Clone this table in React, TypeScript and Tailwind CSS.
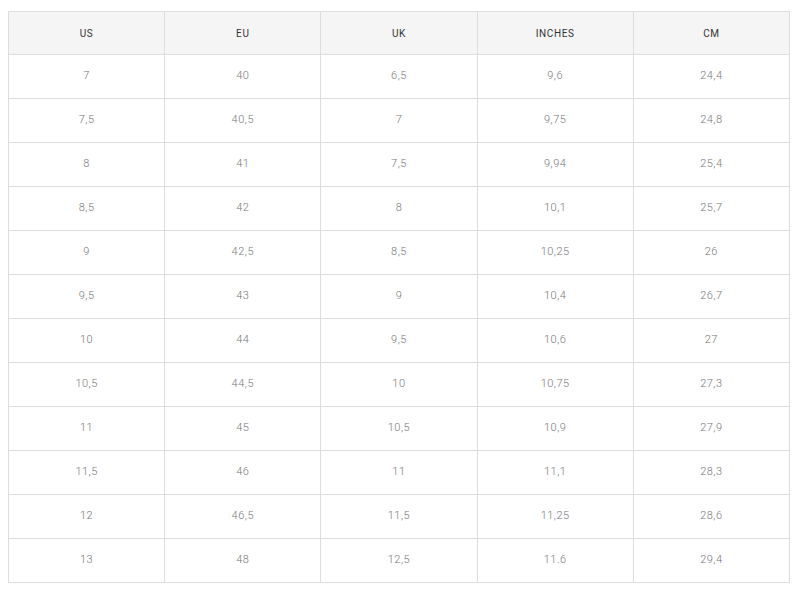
import React from "react";

const head = ["US", "EU", "UK", "INCHES", "CM"];
const rows = [
  ["7", "40", "6,5", "9,6", "24,4"],
  ["7,5", "40,5", "7", "9,75", "24,8"],
  ["8", "41", "7,5", "9,94", "25,4"],
  ["8,5", "42", "8", "10,1", "25,7"],
  ["9", "42,5", "8,5", "10,25", "26"],
  ["9,5", "43", "9", "10,4", "26,7"],
  ["10", "44", "9,5", "10,6", "27"],
  ["10,5", "44,5", "10", "10,75", "27,3"],
  ["11", "45", "10,5", "10,9", "27,9"],
  ["11,5", "46", "11", "11,1", "28,3"],
  ["12", "46,5", "11,5", "11,25", "28,6"],
  ["13", "48", "12,5", "11.6", "29,4"],
];

export default function App() {
  return (
    <div className="w-[804px] h-[600px] bg-white pt-[11px] pl-[8px]" style={{ fontFamily: "Roboto, 'Liberation Sans', sans-serif" }}>
      <table className="w-[782px] border-collapse table-fixed">
        <thead>
          <tr className="h-[43px] bg-[#f5f5f5]">
            {head.map((h) => (
              <th key={h} className="border border-[#dddddd] text-[10px] font-normal tracking-[0.6px] text-[#333] text-center p-0">
                {h}
              </th>
            ))}
          </tr>
        </thead>
        <tbody>
          {rows.map((r, i) => (
            <tr key={i} className="h-[44px]">
              {r.map((c, j) => (
                <td key={j} className="border border-[#dddddd] text-[11px] font-light text-[#777] text-center p-0 tracking-[0.5px]">
                  {c}
                </td>
              ))}
            </tr>
          ))}
        </tbody>
      </table>
    </div>
  );
}
